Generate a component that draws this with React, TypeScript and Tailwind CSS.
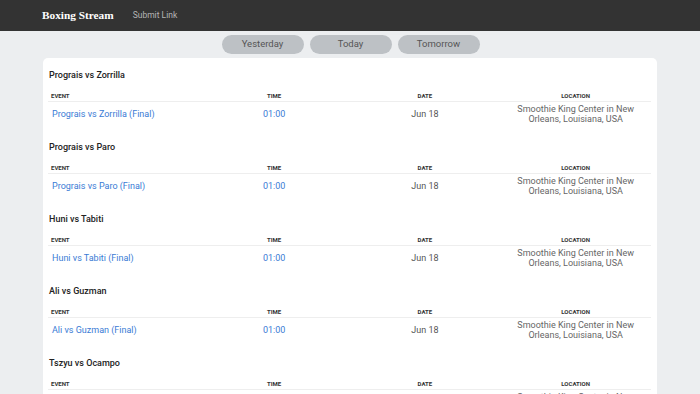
import React from "react";

const fights = [
  { title: "Prograis vs Zorrilla", event: "Prograis vs Zorrilla (Final)" },
  { title: "Prograis vs Paro", event: "Prograis vs Paro (Final)" },
  { title: "Huni vs Tabiti", event: "Huni vs Tabiti (Final)" },
  { title: "Ali vs Guzman", event: "Ali vs Guzman (Final)" },
  { title: "Tszyu vs Ocampo", event: "Tszyu vs Ocampo (Final)" },
];

export default function App() {
  return (
    <div className="min-h-screen bg-[#eceef0] font-['Roboto',sans-serif]">
      {/* Navbar */}
      <nav className="h-[31px] bg-[#333333] flex items-center pl-[42px]">
        <span className="font-['Liberation_Serif',serif] font-bold text-[11.3px] text-white">
          Boxing Stream
        </span>
        <a className="ml-[19px] text-[8.5px] text-[#b5b5b5]">Submit Link</a>
      </nav>

      {/* Day switcher */}
      <div className="flex justify-center gap-[6px] mt-[4px] pl-[1px]">
        {["Yesterday", "Today", "Tomorrow"].map((d) => (
          <button
            key={d}
            className="w-[82px] h-[19px] rounded-full bg-[#bdc1c5] text-[9.5px] text-[#555]"
          >
            {d}
          </button>
        ))}
      </div>

      {/* Events card */}
      <div className="mx-[43px] mt-[4px] bg-white rounded-[5px] pt-[11px] pl-[5px] pr-[6px]">
        {fights.map((f) => (
          <div key={f.title} className="mb-[16px]">
            <h3 className="h-[12px] leading-[12px] text-[9px] font-medium text-[#222] mb-[9px] pl-[1px]">
              {f.title}
            </h3>
            <div className="grid grid-cols-4 h-[12px] items-center border-b border-[#eeeeee] text-[6px] font-bold uppercase text-[#333] text-center">
              <div className="text-left pl-[3px]">Event</div>
              <div>Time</div>
              <div>Date</div>
              <div>Location</div>
            </div>
            <div className="grid grid-cols-4 h-[23px] items-center text-[9px] leading-[10px] text-center">
              <div className="text-left pl-[4px] text-[#3a7bd5]">{f.event}</div>
              <div className="text-[#3a7bd5]">01:00</div>
              <div className="text-[#555]">Jun 18</div>
              <div className="text-[#666] px-[12px]">
                Smoothie King Center in New Orleans, Louisiana, USA
              </div>
            </div>
          </div>
        ))}
      </div>
    </div>
  );
}
